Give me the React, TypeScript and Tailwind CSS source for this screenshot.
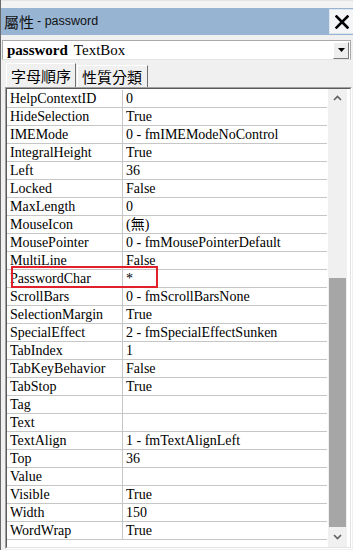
import React from "react";

const rows: [string, string][] = [
  ["HelpContextID", "0"],
  ["HideSelection", "True"],
  ["IMEMode", "0 - fmIMEModeNoControl"],
  ["IntegralHeight", "True"],
  ["Left", "36"],
  ["Locked", "False"],
  ["MaxLength", "0"],
  ["MouseIcon", "(無)"],
  ["MousePointer", "0 - fmMousePointerDefault"],
  ["MultiLine", "False"],
  ["PasswordChar", "*"],
  ["ScrollBars", "0 - fmScrollBarsNone"],
  ["SelectionMargin", "True"],
  ["SpecialEffect", "2 - fmSpecialEffectSunken"],
  ["TabIndex", "1"],
  ["TabKeyBehavior", "False"],
  ["TabStop", "True"],
  ["Tag", ""],
  ["Text", ""],
  ["TextAlign", "1 - fmTextAlignLeft"],
  ["Top", "36"],
  ["Value", ""],
  ["Visible", "True"],
  ["Width", "150"],
  ["WordWrap", "True"],
];

const serif = "font-['Liberation_Serif','Noto_Sans_CJK_TC',serif]";

export default function App() {
  return (
    <div className="w-[353px] h-[550px] bg-[#f0f0f0] overflow-hidden relative border-l border-[#6a6a6a]">
      <div className="h-[8px] bg-[#f3f3f3] border-t border-[#e4e4e4]" />
      {/* Title bar */}
      <div className="h-[27px] bg-[#97b4d3] flex items-center justify-between">
        <span className="pl-[3px] text-[12.5px] leading-none text-[#111] font-['Liberation_Sans','Noto_Sans_CJK_TC',sans-serif] flex items-center">
          <span className="text-[15px] font-['Noto_Sans_CJK_TC',sans-serif]">屬性</span>
          <span className="ml-[3px]">- password</span>
        </span>
        <div className="w-[24px] h-[25px] bg-[#f3f5f7] border-l border-t border-b border-[#dfe5ec] flex items-center justify-center">
          <svg width="14" height="14" viewBox="0 0 14 14">
            <path d="M1.5 1.5 L12.5 12.5 M12.5 1.5 L1.5 12.5" stroke="#000" strokeWidth="2.6" strokeLinecap="square" />
          </svg>
        </div>
      </div>
      {/* Combo */}
      <div className="mt-[5px] ml-[1px] mr-[2px] h-[20px] bg-white border border-[#a9a9a9] border-b-[#e3e3e3] flex items-center justify-between">
        <span className={`${serif} pl-[4px] leading-none text-black flex items-baseline`}>
          <b className="text-[15px]">password</b>
          <span className="ml-[6px] text-[15px]">TextBox</span>
        </span>
        <div className="w-[16px] h-[17px] mr-[1px] bg-[#eeeeee] border border-[#fff] border-r-[#7a7a7a] border-b-[#7a7a7a] flex items-center justify-center">
          <svg width="7" height="4" viewBox="0 0 7 4">
            <path d="M0 0 H7 L3.5 4 Z" fill="#000" />
          </svg>
        </div>
      </div>
      {/* Tabs */}
      <div className="h-[27px] flex items-end pl-[5px]">
        <div className="h-[24px] px-[4px] border-t border-l border-white border-r border-r-[#6f6f6f] bg-[#f0f0f0] flex items-center text-[15px] leading-none text-black font-['Noto_Sans_CJK_TC',sans-serif]">
          字母順序
        </div>
        <div className="h-[22px] pl-[4px] pr-[5px] ml-[1px] border-t border-l border-white border-r border-r-[#6f6f6f] bg-[#f0f0f0] flex items-center text-[15px] leading-none text-black font-['Noto_Sans_CJK_TC',sans-serif]">
          性質分類
        </div>
      </div>
      {/* Grid */}
      <div className="ml-[4px] mr-[1px] h-[462px] border-l border-t border-[#a0a0a0] border-r border-b border-r-[#ffffff] border-b-[#ffffff]">
        <div className="h-full border-l border-t border-[#5a5a5a] border-r border-b border-r-[#e3e3e3] border-b-[#e3e3e3] flex bg-white">
          <div className="w-[320px] flex flex-col pt-[1px]">
            {rows.map(([k, v]) => (
              <div key={k} className={`${serif} h-[18px] flex border-b border-[#c6c6c6] text-[14px] leading-none text-black`}>
                <div className="w-[116px] pl-[3px] border-r border-[#c6c6c6] flex items-center">{k}</div>
                <div className="pl-[3px] flex items-center">{v}</div>
              </div>
            ))}
          </div>
          {/* scrollbar */}
          <div className="w-[19px] ml-[1px] bg-[#f0f0f0] flex flex-col">
            <div className="h-[18px] flex items-center justify-center">
              <svg width="9" height="6" viewBox="0 0 9 6">
                <path d="M1 5 L4.5 1.5 L8 5" stroke="#606060" strokeWidth="1.6" fill="none" />
              </svg>
            </div>
            <div className="h-[171px]" />
            <div className="h-[249px] mx-[1px] bg-[#a6a6a6]" />
            <div className="flex-1 flex items-center justify-center">
              <svg width="9" height="6" viewBox="0 0 9 6">
                <path d="M1 1 L4.5 4.5 L8 1" stroke="#606060" strokeWidth="1.6" fill="none" />
              </svg>
            </div>
          </div>
        </div>
      </div>
      {/* red annotation */}
      <div className="absolute left-[10px] top-[266px] w-[147px] h-[22px] border-2 border-[#e0202a]" />
    </div>
  );
}
